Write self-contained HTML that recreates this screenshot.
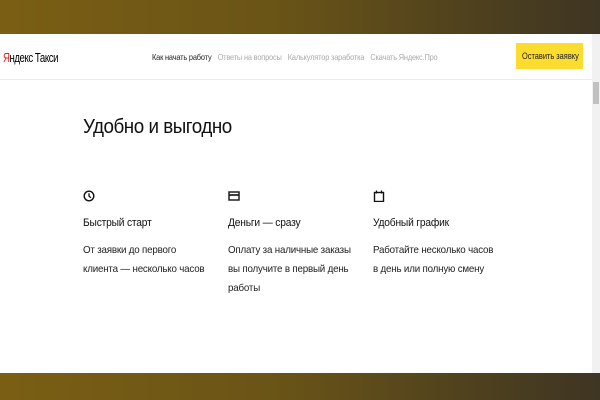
<!DOCTYPE html>
<html><head><meta charset="utf-8"><style>
*{margin:0;padding:0;box-sizing:border-box}
body{width:600px;height:400px;overflow:hidden;background:#fff;font-family:"Liberation Sans",sans-serif;position:relative;color:#000}
.bar{position:absolute;left:0;width:600px;background:linear-gradient(90deg,#7a5e14 0%,#6a5416 45%,#3e3523 100%)}
.hdr{position:absolute;top:34px;left:0;width:592px;height:46px;border-bottom:1px solid #ececec}
.sx{transform-origin:0 0;white-space:nowrap}
.logo{position:absolute;left:3px;top:16px;font-size:13px;letter-spacing:-0.6px;transform:scaleX(0.74)}
.logo span{color:#e31b1b}
.nav{position:absolute;left:152px;top:18px;font-size:8.5px;color:#aaa;letter-spacing:-0.2px;transform:scaleX(0.87)}
.nav b{font-weight:normal;color:#222;margin-right:7px}
.nav i{font-style:normal;margin-right:7px}
.btn{position:absolute;left:516px;top:9px;width:67px;height:26px;background:#fcdc2e;color:#222}
.btn div{position:absolute;left:6px;top:8px;font-size:9.5px;transform:scaleX(0.78)}
.sb{position:absolute;left:592px;top:34px;width:8px;height:339px;background:#f1f1f1}
.th{position:absolute;left:593px;top:82px;width:6px;height:22px;background:#c1c1c1}
h1{position:absolute;left:83px;top:116px;font-size:20px;font-weight:normal;letter-spacing:-0.5px;color:#111;transform:scaleX(0.94)}
.col{position:absolute;top:190px;width:160px}
.col svg{display:block}
.in{transform:scaleX(0.93)}
.t{margin-top:15px;font-size:11px;color:#111;letter-spacing:-0.2px}
.d{margin-top:12px;font-size:10.5px;line-height:19px;color:#222;letter-spacing:-0.2px}
</style></head><body>
<div class="bar" style="top:0;height:34px"></div>
<div class="hdr">
<div class="logo sx"><span>Я</span>ндекс Такси</div>
<div class="nav sx"><b>Как начать работу</b><i>Ответы на вопросы</i><i>Калькулятор заработка</i><i>Скачать Яндекс.Про</i></div>
<div class="btn"><div class="sx">Оставить заявку</div></div>
</div>
<div class="sb"></div><div class="th"></div>
<h1 class="sx">Удобно и выгодно</h1>
<div class="col" style="left:83px">
<svg width="12" height="12" viewBox="0 0 12 12"><circle cx="6" cy="6" r="4.8" fill="none" stroke="#111" stroke-width="1.4"/><path d="M6 3.3V6l1.8 1.8" fill="none" stroke="#111" stroke-width="1.3"/></svg>
<div class="in sx"><div class="t">Быстрый старт</div>
<div class="d">От заявки до первого<br>клиента — несколько часов</div></div>
</div>
<div class="col" style="left:228px">
<svg width="12" height="12" viewBox="0 0 12 12"><rect x="1" y="2" width="10" height="8" fill="none" stroke="#111" stroke-width="1.4"/><path d="M1 5h10" stroke="#111" stroke-width="1.6"/></svg>
<div class="in sx"><div class="t">Деньги — сразу</div>
<div class="d">Оплату за наличные заказы<br>вы получите в первый день<br>работы</div></div>
</div>
<div class="col" style="left:373px">
<svg width="12" height="12" viewBox="0 0 12 12"><rect x="1.5" y="2.5" width="9" height="9" fill="none" stroke="#111" stroke-width="1.4"/><path d="M3.5 0.5v3M8.5 0.5v3" stroke="#111" stroke-width="1.3"/></svg>
<div class="in sx"><div class="t">Удобный график</div>
<div class="d">Работайте несколько часов<br>в день или полную смену</div></div>
</div>
<div class="bar" style="top:373px;height:27px"></div>
</body></html>
